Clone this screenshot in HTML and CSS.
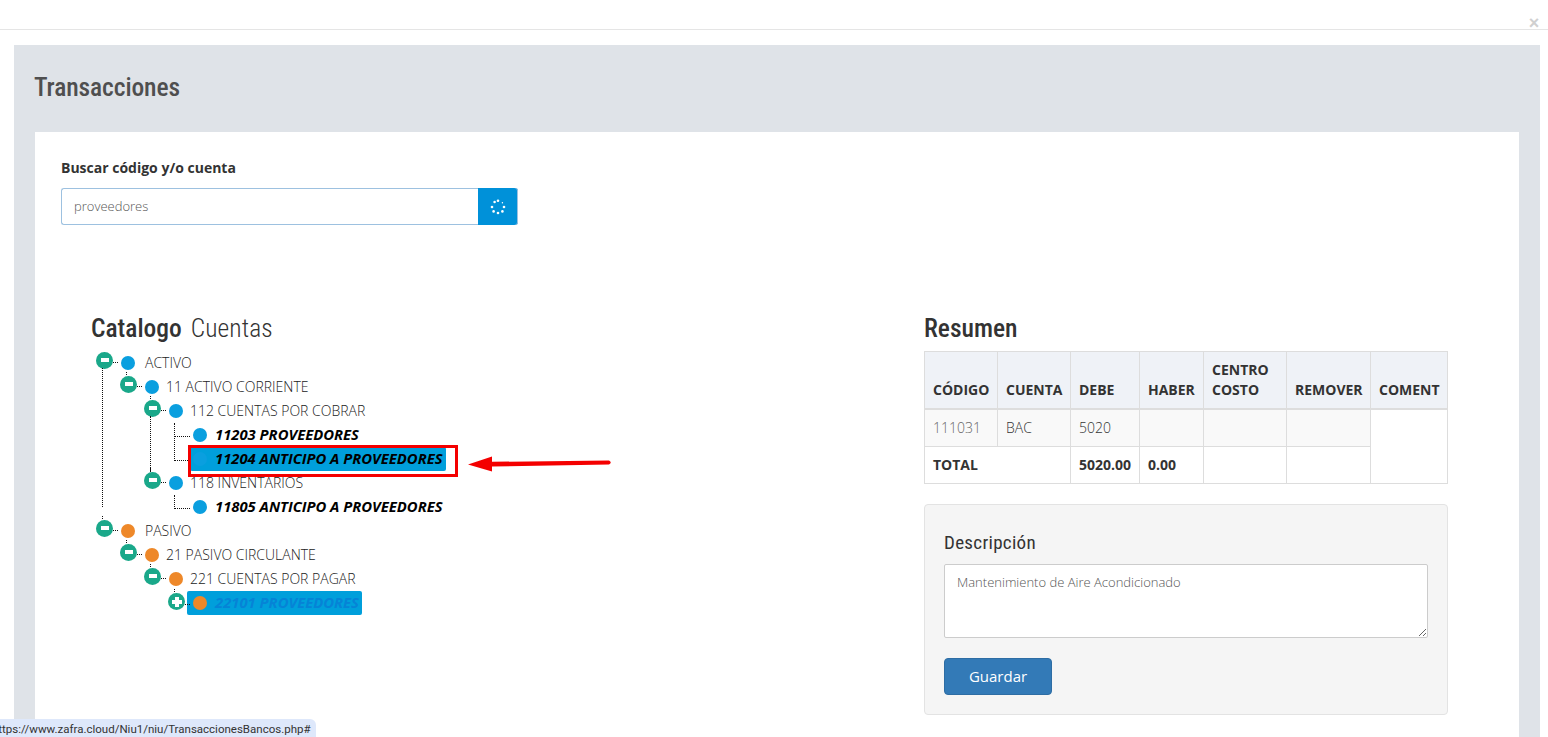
FILE: index.html
```html
<!DOCTYPE html>
<html lang="es">
<head>
<meta charset="utf-8">
<title>Transacciones</title>
<link rel="stylesheet" href="styles.css">
</head>
<body>
<header class="topbar"><span class="close">&times;</span></header>
<main class="panel">
  <h1 class="panel-title">Transacciones</h1>
  <section class="card">
    <label class="search-label">Buscar código y/o cuenta</label>
    <div class="search">
      <input class="search-input" type="text" value="proveedores">
      <button class="search-btn" type="button" aria-label="Buscando">
        <svg width="16" height="16" viewBox="0 0 16 16" fill="#fff">
          <circle cx="8" cy="1.8" r="1.3"/><circle cx="12.4" cy="3.8" r="0.7"/><circle cx="14" cy="8" r="1.3"/><circle cx="12.4" cy="12.4" r="1.3"/>
          <circle cx="8" cy="14" r="1.3"/><circle cx="3.6" cy="12.4" r="1.3"/><circle cx="2" cy="8" r="1.3"/><circle cx="4.6" cy="3" r="1.3"/>
        </svg>
      </button>
    </div>
    <div class="columns">
      <div class="col-tree">
        <h2 class="heading"><span class="heading-strong">Catalogo</span> <span class="heading-light">Cuentas</span></h2>
        <ul class="tree">
          <li>
            <div class="row"><span class="toggle first minus"></span><a class="link" href="#"><i class="dot blue"></i><span class="label wide">ACTIVO</span></a></div>
            <ul class="branch line-root">
              <li>
                <div class="row"><span class="toggle minus"></span><a class="link" href="#"><i class="dot blue"></i><span class="label">11 ACTIVO CORRIENTE</span></a></div>
                <ul class="branch">
                  <li>
                    <div class="row"><span class="toggle minus"></span><a class="link" href="#"><i class="dot blue"></i><span class="label">112 CUENTAS POR COBRAR</span></a></div>
                    <ul class="branch line-sub">
                      <li class="leaf"><div class="row"><a class="link account" href="#"><i class="dot blue"></i><span class="label strong">11203 PROVEEDORES</span></a></div></li>
                      <li class="leaf tall"><div class="row"><a class="link account selected" href="#"><i class="dot blue"></i><span class="label strong">11204 ANTICIPO A PROVEEDORES</span></a></div></li>
                    </ul>
                  </li>
                  <li>
                    <div class="row"><span class="toggle minus"></span><a class="link" href="#"><i class="dot blue"></i><span class="label">118 INVENTARIOS</span></a></div>
                    <ul class="branch">
                      <li class="leaf"><div class="row"><a class="link account" href="#"><i class="dot blue"></i><span class="label strong">11805 ANTICIPO A PROVEEDORES</span></a></div></li>
                    </ul>
                  </li>
                </ul>
              </li>
            </ul>
          </li>
          <li>
            <div class="row"><span class="toggle minus"></span><a class="link" href="#"><i class="dot orange"></i><span class="label wide">PASIVO</span></a></div>
            <ul class="branch">
              <li>
                <div class="row"><span class="toggle minus"></span><a class="link" href="#"><i class="dot orange"></i><span class="label">21 PASIVO CIRCULANTE</span></a></div>
                <ul class="branch">
                  <li>
                    <div class="row"><span class="toggle minus"></span><a class="link" href="#"><i class="dot orange"></i><span class="label">221 CUENTAS POR PAGAR</span></a></div>
                    <ul class="branch">
                      <li><div class="row"><span class="toggle plus"></span><a class="link account selected dim" href="#"><i class="dot orange"></i><span class="label strong">22101 PROVEEDORES</span></a></div></li>
                    </ul>
                  </li>
                </ul>
              </li>
            </ul>
          </li>
        </ul>
        <div class="callout"></div>
        <svg class="arrow" width="146" height="18" viewBox="0 0 146 18">
          <path d="M1 9.5 L25 1.5 L25 6.8 L142 5.6 Q145.5 7.5 142 9.6 L25 11.6 L25 16.5 Z" fill="#f40000"/>
        </svg>
      </div>
      <div class="col-summary">
        <h2 class="heading heading-strong">Resumen</h2>
        <table class="summary">
          <colgroup>
            <col class="c1"><col class="c2"><col class="c3"><col class="c4"><col class="c5"><col class="c6"><col class="c7">
          </colgroup>
          <thead>
            <tr><th>CÓDIGO</th><th>CUENTA</th><th>DEBE</th><th>HABER</th><th>CENTRO COSTO</th><th>REMOVER</th><th>COMENT</th></tr>
          </thead>
          <tbody>
            <tr class="stripe"><td class="muted">111031</td><td>BAC</td><td>5020</td><td></td><td></td><td></td><td class="plain" rowspan="2"></td></tr>
            <tr class="total"><td colspan="2">TOTAL</td><td>5020.00</td><td>0.00</td><td></td><td></td></tr>
          </tbody>
        </table>
        <div class="well">
          <label class="well-label">Descripción</label>
          <textarea class="well-text">Mantenimiento de Aire Acondicionado</textarea>
          <button class="save" type="button">Guardar</button>
        </div>
      </div>
    </div>
  </section>
</main>
<div class="status">https://www.zafra.cloud/Niu1/niu/TransaccionesBancos.php#</div>
</body>
</html>
```

FILE: styles.css
```css
* { box-sizing: border-box; }
html, body { margin: 0; height: 737px; overflow: hidden; background: #fff; }
body { font-family: "Open Sans", "Liberation Sans", sans-serif; font-size: 14px; color: #333; }

.topbar { height: 30px; border-bottom: 1px solid #e5e5e5; display: flex; justify-content: flex-end; align-items: flex-end; padding-right: 8px; }
.close { font: 700 18px/18px "Liberation Sans", sans-serif; color: #d0d0d0; width: 12px; margin-bottom: -1px; text-align: center; height: 16px; }

.panel { margin: 15px 8px 0 14px; background: #dfe3e8; padding: 0 21px; height: 700px; }
.panel-title { margin: 0 0 0 -1px; height: 87px; padding-top: 27px; font: 500 25.5px/30px Roboto, sans-serif; font-stretch: 87.5%; letter-spacing: -0.1px; color: #4f4f4f; }

.card { background: #fff; padding: 26px 26px 0; height: 620px; }
.search-label { display: block; font-weight: 700; font-size: 14px; line-height: 20px; color: #333; }
.search { display: flex; width: 457px; height: 37px; margin-top: 10px; }
.search-input { flex: 1; min-width: 0; border: 1px solid #9dc1e0; border-right: 0; border-radius: 3px 0 0 3px; padding: 0 12px 2px; font: 300 13px "Open Sans", sans-serif; color: #555; outline: none; }
.search-btn { width: 40px; border: 0; border-radius: 0 3px 3px 0; background: #0091d9; box-shadow: inset -1px 0 #9dc1e0; padding: 0; display: flex; align-items: center; justify-content: center; }

.columns { display: flex; margin-top: 89px; }
.col-tree { width: 833px; margin-left: 30px; position: relative; flex: none; }
.col-summary { width: 524px; flex: none; }
.heading { margin: 0 0 7px; height: 30px; font: 400 25.5px/28px Roboto, sans-serif; font-stretch: 87.5%; color: #333; }
.heading-strong { font-weight: 500; }
.heading-light { font-weight: 300; margin-left: 3px; letter-spacing: 0.1px; }

.tree, .branch { list-style: none; margin: 0; padding: 0; }
.tree { padding-left: 5px; }
.branch { padding-left: 24px; position: relative; }
.line-root::before { content: ""; position: absolute; left: 6px; top: -7px; bottom: 12px; border-left: 1px dotted #111; }
.line-sub::before { content: ""; position: absolute; left: 6px; top: -7px; bottom: -1px; border-left: 1px dotted #111; }

.row { display: flex; align-items: center; height: 24px; position: relative; }
.toggle { width: 17px; height: 17px; border-radius: 50%; background: #1aa88a; position: relative; margin-right: 8px; margin-bottom: 6px; flex: none; }
.toggle.first::before { display: none; }
.toggle::before { content: ""; position: absolute; left: 6px; top: -4px; height: 3px; border-left: 1px dotted #111; }
.toggle::after { content: ""; position: absolute; left: 17px; top: 10px; width: 5px; border-top: 1px dotted #111; }
.minus { background-image: linear-gradient(#fff, #fff); background-size: 8px 4px; background-repeat: no-repeat; background-position: center 6px; }
.plus { background-image: linear-gradient(#fff, #fff), linear-gradient(#fff, #fff); background-size: 10px 4px, 4px 10px; background-repeat: no-repeat; background-position: center; margin-right: 2px; margin-bottom: 3px; }
.plus::after { top: 11px; }

.link { display: flex; align-items: center; height: 24px; text-decoration: none; color: #333; }
.dot { display: block; width: 14px; height: 14px; border-radius: 50%; flex: none; }
.blue { background: #0a9fdf; }
.orange { background: #ee8829; }
.label { margin: 0 0 2px 7px; font-weight: 300; font-size: 14px; white-space: nowrap; color: #222; }
.label.wide { margin-left: 10px; }
.label.strong { margin-left: 8px; font-weight: 700; font-style: italic; font-size: 14.8px; color: #000; }

.account { margin-left: 25px; }
.selected { background: #009fdb; border-radius: 2px; margin-left: 22px; padding: 0 3px; }
.dim { margin-left: 0; padding-left: 6px; }
.dim .label.strong { color: #0683d6; }

.leaf { position: relative; }
.leaf::before { content: ""; position: absolute; left: 6px; top: 0; height: 13px; width: 15px; border-left: 1px dotted #111; border-bottom: 1px dotted #111; }
.leaf.tall::before { top: -24px; height: 37px; }

.callout { position: absolute; left: 97px; top: 131px; width: 270px; height: 32px; border: 3px solid #f40000; }
.arrow { position: absolute; left: 376px; top: 141px; }

.summary { width: 523px; border-collapse: collapse; table-layout: fixed; font-size: 14px; }
.c1 { width: 73px; } .c2 { width: 73px; } .c3 { width: 69px; } .c4 { width: 64px; } .c5 { width: 83px; } .c6 { width: 84px; } .c7 { width: 77px; }
.summary th, .summary td { border: 1px solid #ddd; padding: 8px; line-height: 20px; text-align: left; vertical-align: bottom; overflow: hidden; white-space: normal; }
.summary th { background: #eff2f7; border-bottom-width: 2px; font-weight: 700; color: #333; padding-bottom: 8px; }
.summary td { font-weight: 300; vertical-align: top; height: 37px; }
.stripe td { background: #f9f9f9; }
.stripe td.plain { background: #fff; }
.muted { color: #666; }
.total td { font-weight: 700; }

.well { margin-top: 20px; width: 524px; height: 211px; background: #f5f5f5; border: 1px solid #e3e3e3; border-radius: 4px; padding: 26px 19px 0; }
.well-label { display: block; font: 400 19px/24px Roboto, sans-serif; font-stretch: 87.5%; color: #333; letter-spacing: 0.3px; }
.well-text { display: block; margin-top: 9px; width: 484px; height: 74px; border: 1px solid #ccc; border-radius: 2px; padding: 8px 12px; font: 300 13px/18px "Open Sans", sans-serif; color: #555; background: #fff; outline: none; }
.save { display: block; margin-top: 20px; width: 108px; height: 37px; background: #337ab7; border: 1px solid #2e6da4; border-radius: 4px; color: #fff; font: 400 15px "Open Sans", sans-serif; padding: 0 0 2px; }

.status { position: absolute; left: 0; top: 719px; width: 316px; height: 18px; background: #dee8fb; border-top-right-radius: 6px; font: 400 11.5px/20px Roboto, sans-serif; color: #333; white-space: nowrap; overflow: hidden; text-indent: -8px; }
```
